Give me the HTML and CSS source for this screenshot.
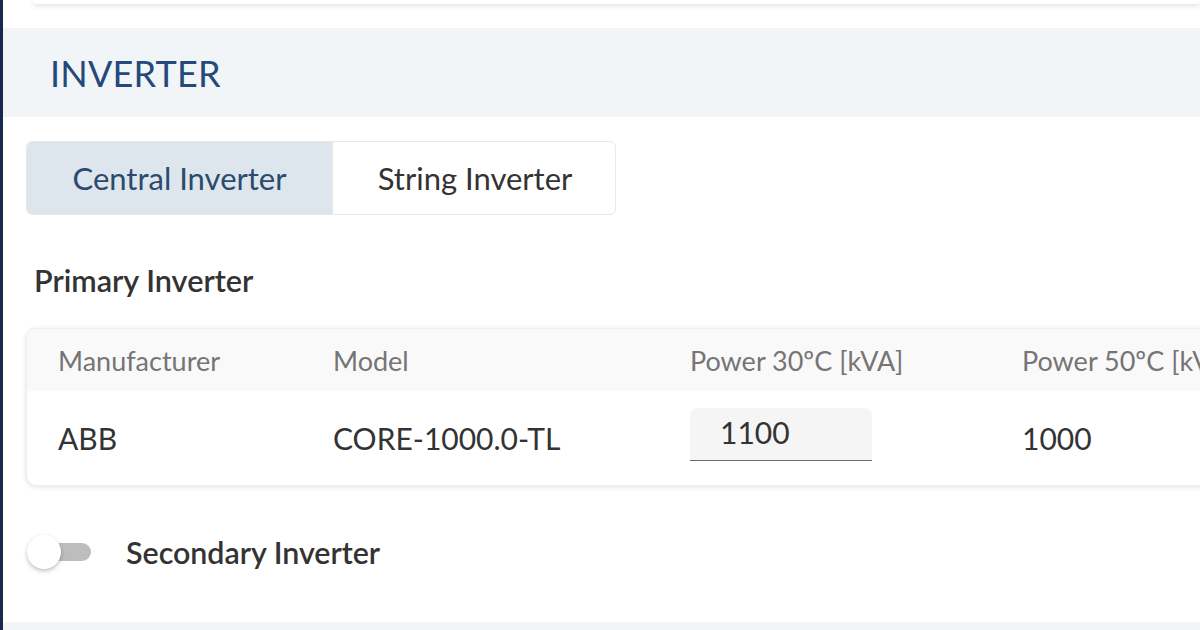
FILE: index.html
```html
<!DOCTYPE html>
<html>
<head>
<meta charset="utf-8">
<link rel="stylesheet" href="styles.css">
</head>
<body>
<div class="page">
  <div class="prev-card"></div>
  <div class="section-head">INVERTER</div>
  <div class="content">
    <div class="seg">
      <div class="seg-btn active">Central Inverter</div>
      <div class="seg-btn">String Inverter</div>
    </div>
    <div class="subtitle">Primary Inverter</div>
    <div class="table-card">
      <div class="row head">
        <div class="cell c1">Manufacturer</div>
        <div class="cell c2">Model</div>
        <div class="cell c3">Power 30ºC [kVA]</div>
        <div class="cell c4">Power 50ºC [kVA]</div>
      </div>
      <div class="row body">
        <div class="cell c1">ABB</div>
        <div class="cell c2">CORE-1000.0-TL</div>
        <div class="cell c3"><div class="input">1100</div></div>
        <div class="cell c4">1000</div>
      </div>
    </div>
    <div class="switch-row">
      <div class="switch"><span class="track"></span><span class="thumb"></span></div>
      <div class="switch-label">Secondary Inverter</div>
    </div>
  </div>
  <div class="next-band"></div>
</div>
</body>
</html>
```

FILE: styles.css
```css
html, body {
  margin: 0;
  padding: 0;
  background: #ffffff;
  font-family: Lato, "Open Sans", sans-serif;
  overflow: hidden;
}
.page {
  width: 1200px;
  height: 630px;
  box-sizing: border-box;
  border-left: 3px solid #17284b;
  overflow: hidden;
}
.prev-card {
  height: 4px;
  margin-left: 30px;
  background: #fff;
  border-radius: 0 0 10px 10px;
  box-shadow: 0 2px 5px rgba(0,0,0,0.14);
}
.section-head {
  margin-top: 24px;
  height: 89px;
  background: #f2f5f8;
  padding-left: 47px;
  display: flex;
  align-items: center;
  font-size: 36px;
  color: #24497a;
  letter-spacing: 0.2px;
}
.content {
  padding-left: 23px;
  padding-top: 24px;
}
.seg {
  display: flex;
  width: 590px;
  height: 74px;
  box-sizing: border-box;
  border: 1px solid #e6e8ea;
  border-radius: 6px;
  overflow: hidden;
}
.seg-btn {
  display: flex;
  align-items: center;
  justify-content: center;
  font-size: 31px;
  color: #333;
  width: 284px;
  flex-shrink: 0;
}
.seg-btn.active {
  width: 306px;
  background: #dde5ed;
  color: #2c4a6e;
  border-right: 1px solid #e6e8ea;
  box-sizing: border-box;
}
.subtitle {
  margin-top: 49px;
  margin-left: 8px;
  font-size: 30.6px;
  font-weight: 600;
  color: #333;
  line-height: 34px;
}
.table-card {
  margin-top: 30px;
  width: 1260px;
  border-radius: 10px;
  background: #fff;
  box-shadow: 0 1px 5px rgba(0,0,0,0.12);
  border: 1px solid #eeeeee;
  overflow: hidden;
}
.row {
  display: flex;
  align-items: center;
  padding-left: 31px;
}
.row.head {
  height: 62px;
  background: #f9f9f9;
  color: #757575;
  font-size: 27px;
}
.row.body {
  height: 94px;
  color: #333;
  font-size: 30px;
}
.cell { flex-shrink: 0; white-space: nowrap; }
.cell.c1 { width: 275px; }
.cell.c2 { width: 357px; }
.cell.c3 { width: 332px; }
.cell.c4 { width: 300px; }
.input {
  width: 182px;
  height: 53px;
  margin-bottom: 8px;
  box-sizing: border-box;
  background: #f5f5f5;
  border-radius: 7px 7px 0 0;
  border-bottom: 1px solid #6b6b6b;
  padding-left: 30px;
  display: flex;
  align-items: center;
  padding-bottom: 4px;
  color: #333;
}
.switch-row {
  display: flex;
  align-items: center;
  height: 50px;
  margin-top: 41px;
}
.switch {
  position: relative;
  width: 68px;
  height: 40px;
  margin-left: -1px;
}
.track {
  position: absolute;
  left: 20px;
  top: 11px;
  width: 46px;
  height: 18px;
  border-radius: 9px;
  background: #bdbdbd;
}
.thumb {
  position: absolute;
  left: 2px;
  top: 3px;
  width: 34px;
  height: 34px;
  border-radius: 50%;
  background: #fff;
  box-shadow: 0 2px 4px rgba(0,0,0,0.25);
}
.switch-label {
  margin-left: 33px;
  font-size: 30.4px;
  font-weight: 600;
  color: #333;
}
.next-band {
  margin-top: 45px;
  height: 40px;
  background: #f2f5f8;
}
```
